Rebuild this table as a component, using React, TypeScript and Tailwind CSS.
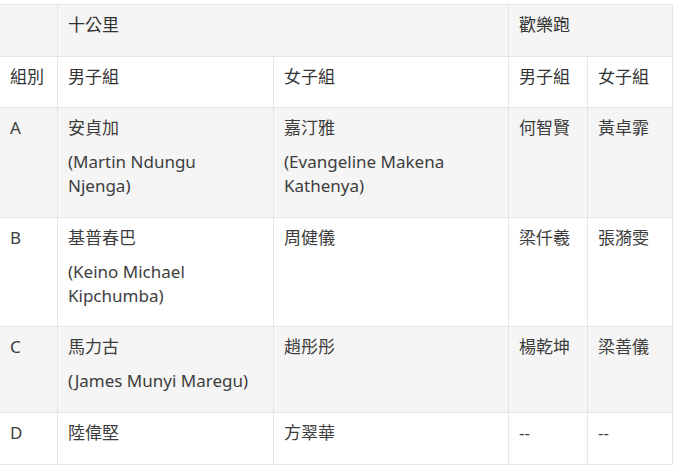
import React from 'react';

interface Row {
  group: string;
  tenMen: string;
  tenMenEn?: string[];
  tenWomen: string;
  tenWomenEn?: string[];
  funMen: string;
  funWomen: string;
}

const rows: Row[] = [
  {
    group: 'A',
    tenMen: '安貞加',
    tenMenEn: ['(Martin Ndungu', 'Njenga)'],
    tenWomen: '嘉汀雅',
    tenWomenEn: ['(Evangeline Makena', 'Kathenya)'],
    funMen: '何智賢',
    funWomen: '黃卓霏',
  },
  {
    group: 'B',
    tenMen: '基普春巴',
    tenMenEn: ['(Keino Michael', 'Kipchumba)'],
    tenWomen: '周健儀',
    funMen: '梁仟羲',
    funWomen: '張漪雯',
  },
  {
    group: 'C',
    tenMen: '馬力古',
    tenMenEn: ['(James Munyi Maregu)'],
    tenWomen: '趙彤彤',
    funMen: '楊乾坤',
    funWomen: '梁善儀',
  },
  { group: 'D', tenMen: '陸偉堅', tenWomen: '方翠華', funMen: '--', funWomen: '--' },
];

const cell = 'border border-[#e6e6e6] px-[10px] pt-2 pb-[8.6px] align-top text-left font-normal';

function NameCell({ zh, en }: { zh: string; en?: string[] }) {
  return (
    <td className={cell}>
      <p className="mb-[10px]">{zh}</p>
      {en && (
        <p className="mb-[10px]">
          {en.map((line, i) => (
            <React.Fragment key={i}>
              {i > 0 && <br />}
              {line}
            </React.Fragment>
          ))}
        </p>
      )}
    </td>
  );
}

export default function App() {
  return (
    <div
      className="w-[679px] h-[468px] bg-white pt-1 text-[17px] leading-6 text-[#3d3d3d]"
      style={{ fontFamily: '"Noto Sans", "Noto Sans CJK TC", sans-serif' }}
    >
      <table className="table-fixed border-collapse w-[673px] -ml-px">
        <colgroup>
          <col className="w-[58px]" />
          <col className="w-[216px]" />
          <col className="w-[235px]" />
          <col className="w-[79px]" />
          <col className="w-[85px]" />
        </colgroup>
        <thead className="text-[#333]">
          <tr className="bg-[#f5f5f5]">
            <th className={cell}></th>
            <th className={cell} colSpan={2}>
              <p className="mb-[10px]">十公里</p>
            </th>
            <th className={cell} colSpan={2}>
              <p className="mb-[10px]">歡樂跑</p>
            </th>
          </tr>
          <tr className="bg-white">
            <th className={cell}><p className="mb-[10px]">組別</p></th>
            <th className={cell}><p className="mb-[10px]">男子組</p></th>
            <th className={cell}><p className="mb-[10px]">女子組</p></th>
            <th className={cell}><p className="mb-[10px]">男子組</p></th>
            <th className={cell}><p className="mb-[10px]">女子組</p></th>
          </tr>
        </thead>
        <tbody>
          {rows.map((r, i) => (
            <tr key={r.group} className={i % 2 === 0 ? 'bg-[#f5f5f5]' : 'bg-white'}>
              <td className={cell}><p className="mb-[10px]">{r.group}</p></td>
              <NameCell zh={r.tenMen} en={r.tenMenEn} />
              <NameCell zh={r.tenWomen} en={r.tenWomenEn} />
              <NameCell zh={r.funMen} />
              <NameCell zh={r.funWomen} />
            </tr>
          ))}
        </tbody>
      </table>
    </div>
  );
}
